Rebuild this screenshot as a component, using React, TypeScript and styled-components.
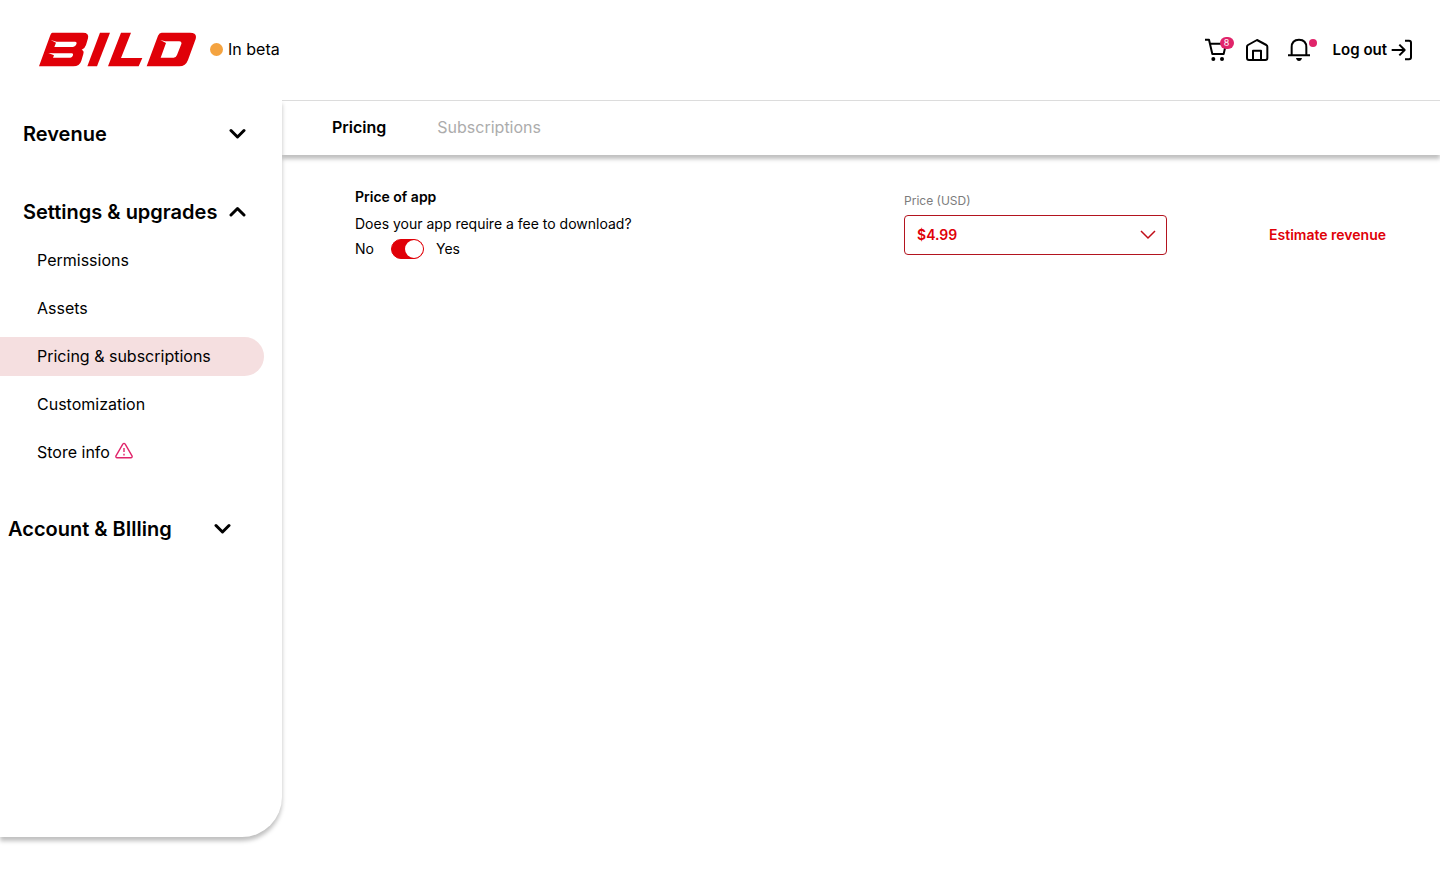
import React, { useState } from "react";
import styled, { createGlobalStyle } from "styled-components";

const red = "#e00008";
const pink = "#e0246a";

const GlobalStyle = createGlobalStyle`
  *, *::before, *::after { box-sizing: border-box; }
  body {
    margin: 0;
    background: #fff;
    color: #000;
    font-family: Inter, "Liberation Sans", sans-serif;
    font-size: 16px;
  }
  button, select, input { font: inherit; color: inherit; }
  button { background: none; border: 0; padding: 0; cursor: pointer; }
  a { color: inherit; text-decoration: none; }
  svg { display: block; flex: none; }
`;

const Page = styled.div`
  min-height: 100vh;
  display: flex;
  flex-direction: column;
`;

const Header = styled.header`
  height: 100px;
  padding: 0 27px 0 39px;
  display: flex;
  align-items: center;
  justify-content: space-between;
`;

const Brand = styled.div`
  padding-bottom: 2px;
  display: flex;
  align-items: center;
  gap: 13px;
`;

const BetaTag = styled.span`
  display: flex;
  align-items: center;
  gap: 5px;
  line-height: 20px;

  &::before {
    content: "";
    width: 13px;
    height: 13px;
    border-radius: 50%;
    background: #f4a340;
  }
`;

const Actions = styled.nav`
  display: flex;
  align-items: center;
  gap: 18px;
`;

const IconButton = styled.button`
  position: relative;
  display: flex;
`;

const CountBadge = styled.span`
  position: absolute;
  top: -1px;
  left: 15px;
  width: 14px;
  height: 12px;
  border-radius: 6px;
  background: ${pink};
  color: #fff;
  font-size: 9px;
  line-height: 12px;
  text-align: center;
`;

const DotBadge = styled.span`
  position: absolute;
  top: 1px;
  left: 22px;
  width: 8px;
  height: 8px;
  border-radius: 50%;
  background: ${pink};
`;

const LogoutButton = styled.button`
  display: flex;
  align-items: center;
  gap: 4px;
  margin-left: 4px;
  font-size: 15px;
  font-weight: 600;
  line-height: 20px;
`;

const Body = styled.div`
  flex: 1;
  display: flex;
  align-items: flex-start;
`;

const Sidebar = styled.aside`
  position: relative;
  z-index: 1;
  flex: none;
  width: 282px;
  min-height: calc(100vh - 159px);
  padding-top: 13px;
  display: flex;
  flex-direction: column;
  gap: 36px;
  border-bottom-right-radius: 40px;
  background: #fff;
  box-shadow: 0 4px 4px rgba(0, 0, 0, 0.25);
  clip-path: inset(0 -8px -10px 0);
`;

const SectionToggle = styled.button<{ $outdent?: boolean }>`
  width: 223px;
  height: 42px;
  margin-left: ${(p) => (p.$outdent ? 8 : 23)}px;
  display: flex;
  align-items: center;
  justify-content: space-between;
  font-size: 20px;
  font-weight: 600;
  line-height: 24px;
  white-space: nowrap;
`;

const MenuList = styled.ul`
  list-style: none;
  margin: 8px 18px 0 0;
  padding: 0;
  display: flex;
  flex-direction: column;
  gap: 9px;
`;

const MenuLink = styled.a<{ $active?: boolean }>`
  height: 39px;
  padding: 0 0 1px 37px;
  display: flex;
  align-items: center;
  gap: 5px;
  border-radius: 0 20px 20px 0;
  background: ${(p) => (p.$active ? "#f5dfe0" : "transparent")};
  line-height: 20px;
`;

const Main = styled.main`
  flex: 1;
  min-width: 0;
`;

const TabBar = styled.div`
  height: 55px;
  padding: 0 50px 2px;
  display: flex;
  align-items: center;
  gap: 51px;
  border-top: 1px solid #dcdcdc;
  background: #fff;
  box-shadow: 0 4px 4px rgba(0, 0, 0, 0.25);
  clip-path: inset(0 0 -10px 0);
`;

const Tab = styled.button<{ $selected: boolean }>`
  font-weight: ${(p) => (p.$selected ? 600 : 400)};
  color: ${(p) => (p.$selected ? "#000" : "#acacac")};
  line-height: 20px;
`;

const PriceRow = styled.section`
  padding: 32px 54px 0 73px;
  display: grid;
  grid-template-columns: 1fr 263px auto;
  column-gap: 102px;
`;

const FeeQuestion = styled.div`
  font-size: 14px;
  line-height: 20px;
`;

const RowTitle = styled.h2`
  margin: 0 0 7px;
  font-size: 14px;
  font-weight: 600;
  line-height: 20px;
`;

const Question = styled.p`
  margin: 0 0 5px;
`;

const ToggleLine = styled.label`
  display: flex;
  align-items: center;
`;

const Switch = styled.input`
  appearance: none;
  width: 33px;
  height: 20px;
  margin: 0 12px 0 17px;
  display: flex;
  justify-content: ${(p) => (p.checked ? "flex-end" : "flex-start")};
  border: 1px solid ${red};
  border-radius: 10px;
  background: ${(p) => (p.checked ? red : "#ccc")};
  cursor: pointer;

  &::before {
    content: "";
    width: 18px;
    height: 18px;
    border-radius: 50%;
    background: #fff;
  }
`;

const Field = styled.div`
  padding-top: 6px;
`;

const FieldLabel = styled.label`
  display: block;
  margin-bottom: 6px;
  font-size: 12px;
  line-height: 16px;
  color: #7c7c7c;
`;

const SelectBox = styled.div`
  position: relative;
  color: ${red};

  svg {
    position: absolute;
    top: 15px;
    right: 11px;
    pointer-events: none;
  }
`;

const Select = styled.select`
  appearance: none;
  width: 100%;
  height: 40px;
  padding: 0 36px 2px 12px;
  border: 1px solid #b3141f;
  border-radius: 4px;
  background: #fff;
  color: ${red};
  font-size: 14px;
  font-weight: 600;
`;

const EstimateLink = styled.a`
  margin-top: 38px;
  color: ${red};
  font-size: 14px;
  font-weight: 600;
  line-height: 20px;
`;

const Logo = () => (
  <svg width="158" height="35" viewBox="27 37 474 105" role="img" aria-label="Bild" fill={red}>
    <path
      fillRule="evenodd"
      d="M67 39H159Q178 39 174 56L168 76Q165 86 155 90Q163 93 160 103L154 123Q149 140 130 140H27L60 49Q63 39 67 39ZM62 61L78 69L73 82H129Q136 82 139 74Q142 66 135 66H80ZM55 100L72 107L69 114H121Q127 114 129 107Q131 101 125 101H72Z"
    />
    <path d="M210 39H240L201 140H172Z" />
    <path d="M273 39H303L273 115H337L326 140H234Z" />
    <path
      fillRule="evenodd"
      d="M395 39H480Q502 39 497 58L474 121Q467 140 448 140H350L384 48Q388 39 395 39ZM391 61L408 70L392 114H431Q438 114 441 106L454 73Q456 65 448 65H406Z"
    />
  </svg>
);

const CartIcon = () => (
  <svg width="22" height="24" viewBox="46 39 66 72" fill="none" stroke="#000" strokeWidth="6" strokeLinejoin="round">
    <path d="M46 44H58L68 87H102L109 56H60" />
    <circle cx="71" cy="102" r="6" fill="#000" stroke="none" />
    <circle cx="97" cy="102" r="6" fill="#000" stroke="none" />
  </svg>
);

const HomeIcon = () => (
  <svg width="24" height="24" viewBox="165 39 72 72" fill="none" stroke="#000" strokeWidth="6" strokeLinejoin="round">
    <path d="M201 45L229 60Q232 62 232 65V99Q232 105 226 105H177Q171 105 171 99V65Q171 62 174 60Z" />
    <path d="M189 105V77H213V105" />
  </svg>
);

const BellIcon = () => (
  <svg width="24" height="24" viewBox="291 39 72 72" fill="none" stroke="#000" strokeWidth="6">
    <path d="M294 91H360M305 91V67Q305 44 327 44Q349 44 349 67V91" />
    <path d="M318 99H336Q334 108 327 108Q320 108 318 99Z" fill="#000" stroke="none" />
  </svg>
);

const LogoutIcon = () => (
  <svg width="22" height="22" viewBox="604 42 66 66" fill="none" stroke="#000" strokeWidth="6" strokeLinejoin="round">
    <path d="M606 75H644M629 59L645 75L629 91" />
    <path d="M646 47H658Q664 47 664 53V97Q664 103 658 103H646" />
  </svg>
);

const Chevron = ({ up }: { up?: boolean }) => (
  <svg width="17" height="12" viewBox="0 0 17 12" fill="none" stroke="#000" strokeWidth="3" strokeLinecap="round" strokeLinejoin="round">
    <path d={up ? "M2 9L8.5 2.5L15 9" : "M2 2.5L8.5 9L15 2.5"} />
  </svg>
);

const WarningIcon = () => (
  <svg width="18" height="20" viewBox="0 0 18 20" fill="none" stroke={pink} strokeWidth="1.4" strokeLinejoin="round" role="img" aria-label="Needs attention">
    <path d="M7.8 2.2Q9 .6 10.2 2.2L17 13.8Q17.6 15.6 15.8 15.8H2.2Q.4 15.6 1 13.8Z" />
    <path d="M9 6V10M9 11.8V13.4" />
  </svg>
);

const menuItems = [
  { label: "Permissions" },
  { label: "Assets" },
  { label: "Pricing & subscriptions", active: true },
  { label: "Customization" },
  { label: "Store info", warning: true },
];

export default function App() {
  const [tab, setTab] = useState("Pricing");
  const [paid, setPaid] = useState(true);

  return (
    <Page>
      <GlobalStyle />
      <Header>
        <Brand>
          <Logo />
          <BetaTag>In beta</BetaTag>
        </Brand>
        <Actions>
          <IconButton aria-label="Cart">
            <CartIcon />
            <CountBadge>8</CountBadge>
          </IconButton>
          <IconButton aria-label="Home">
            <HomeIcon />
          </IconButton>
          <IconButton aria-label="Notifications">
            <BellIcon />
            <DotBadge />
          </IconButton>
          <LogoutButton>
            Log out
            <LogoutIcon />
          </LogoutButton>
        </Actions>
      </Header>
      <Body>
        <Sidebar>
          <SectionToggle aria-expanded={false}>
            Revenue
            <Chevron />
          </SectionToggle>
          <div>
            <SectionToggle aria-expanded>
              Settings &amp; upgrades
              <Chevron up />
            </SectionToggle>
            <MenuList>
              {menuItems.map((item) => (
                <li key={item.label}>
                  <MenuLink href="#" $active={item.active}>
                    {item.label}
                    {item.warning && <WarningIcon />}
                  </MenuLink>
                </li>
              ))}
            </MenuList>
          </div>
          <SectionToggle $outdent aria-expanded={false}>
            Account &amp; BIlling
            <Chevron />
          </SectionToggle>
        </Sidebar>
        <Main>
          <TabBar role="tablist">
            {["Pricing", "Subscriptions"].map((name) => (
              <Tab key={name} role="tab" aria-selected={tab === name} $selected={tab === name} onClick={() => setTab(name)}>
                {name}
              </Tab>
            ))}
          </TabBar>
          <PriceRow>
            <FeeQuestion>
              <RowTitle>Price of app</RowTitle>
              <Question id="fee-question">Does your app require a fee to download?</Question>
              <ToggleLine>
                No
                <Switch
                  type="checkbox"
                  role="switch"
                  aria-describedby="fee-question"
                  checked={paid}
                  onChange={(e) => setPaid(e.target.checked)}
                />
                Yes
              </ToggleLine>
            </FeeQuestion>
            <Field>
              <FieldLabel htmlFor="price">Price (USD)</FieldLabel>
              <SelectBox>
                <Select id="price" defaultValue="$4.99">
                  <option>$4.99</option>
                </Select>
                <svg width="16" height="10" viewBox="0 0 16 10" fill="none" stroke="#c00d18" strokeWidth="1.5">
                  <path d="M1 1L8 8L15 1" />
                </svg>
              </SelectBox>
            </Field>
            <EstimateLink href="#">Estimate revenue</EstimateLink>
          </PriceRow>
        </Main>
      </Body>
    </Page>
  );
}
